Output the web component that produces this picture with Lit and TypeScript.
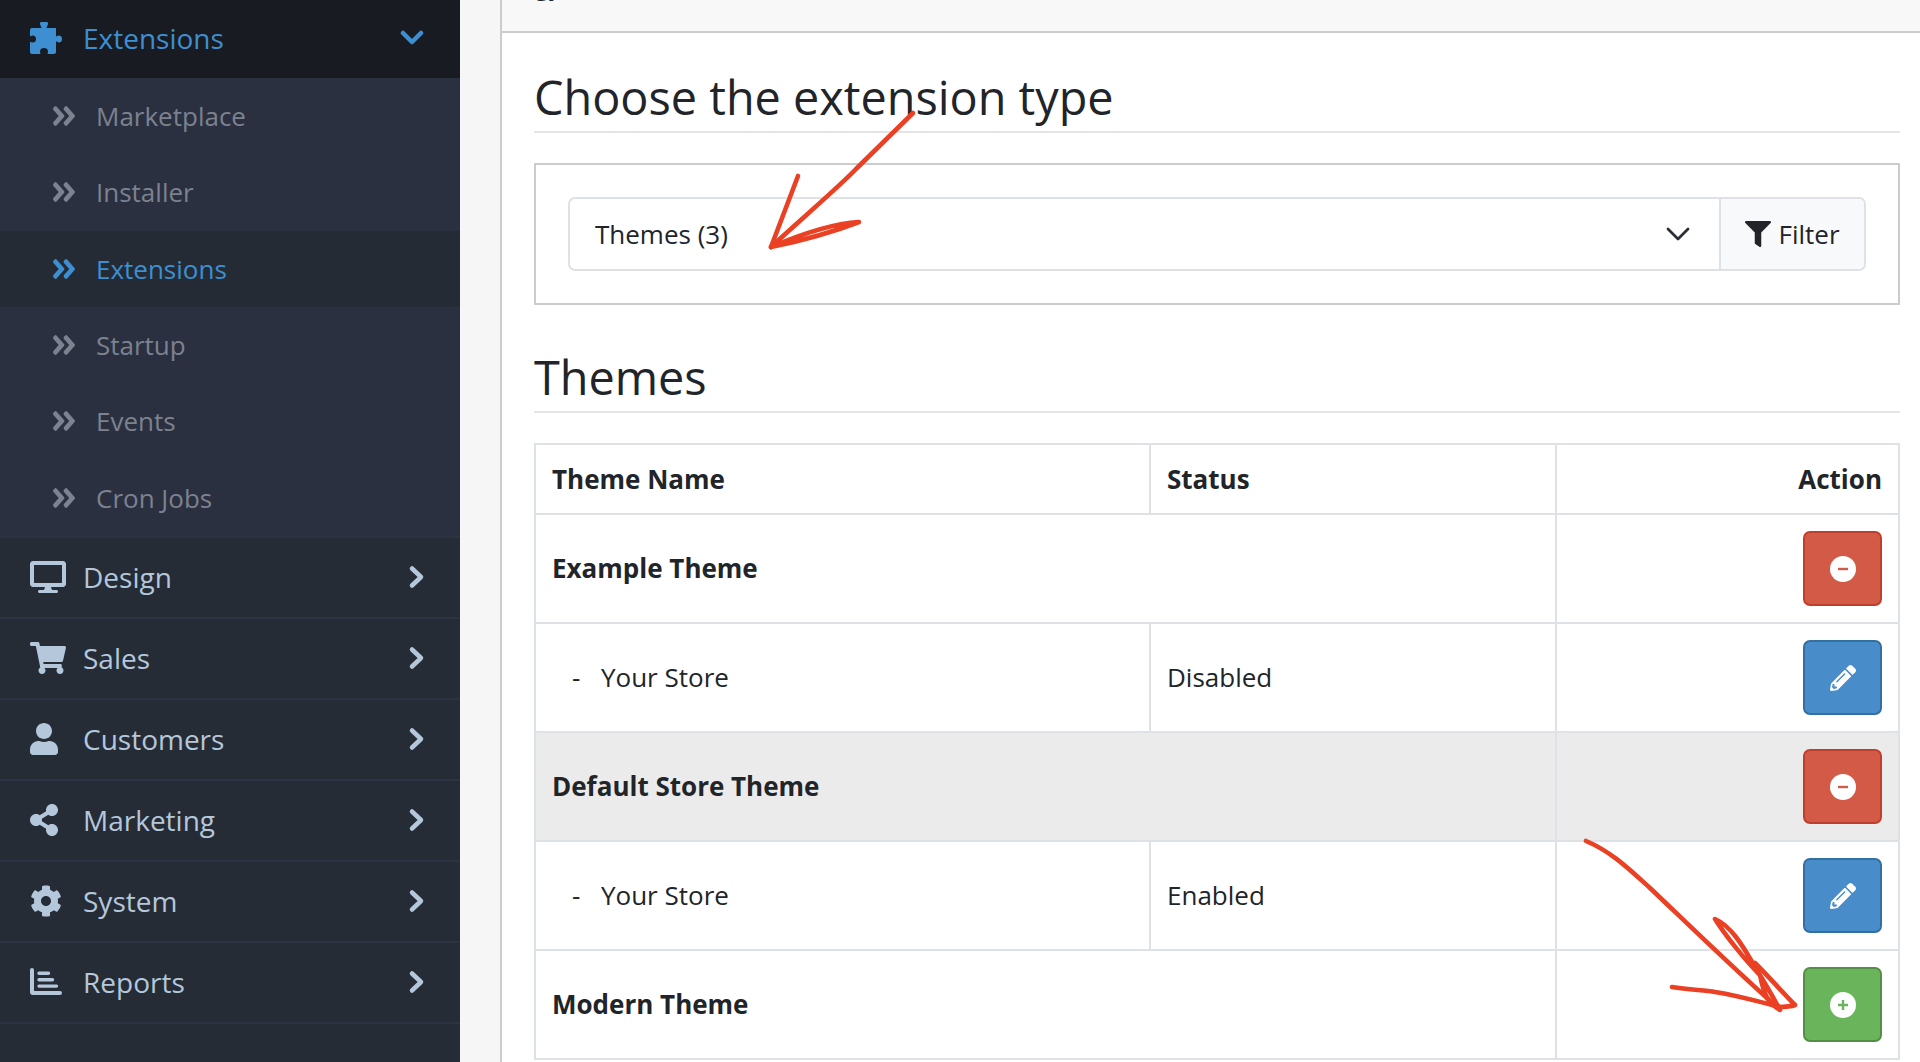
import { LitElement, html, css, svg } from "lit";
import { customElement } from "lit/decorators.js";

const ICONS: Record<string, [string, string]> = {
  puzzle: ["0 0 32 32", "M2 6H11C12 6 11 4.5 10.5 3.5A4 3.5 0 1 1 17.5 3.5C17 4.5 16 6 17 6H26V14C26 15 27.5 14 28.5 13.5A3.5 3.5 0 1 1 28.5 20.5C27.5 20 26 19 26 20V30A2 2 0 0 1 24 32H18C17 32 18 30.5 18 29.5A4 3.5 0 0 0 10 29.5C10 30.5 11 32 10 32H2A2 2 0 0 1 0 30V20C0 19 1.5 20.5 2.5 20.5A3.5 3.5 0 0 0 2.5 13.5C1.5 13.5 0 15 0 14V8A2 2 0 0 1 2 6Z"],
  desktop: ["0 0 576 512", "M528 0H48C21.5 0 0 21.5 0 48v320c0 26.5 21.5 48 48 48h192l-16 48h-72c-13.3 0-24 10.7-24 24s10.7 24 24 24h272c13.3 0 24-10.7 24-24s-10.7-24-24-24h-72l-16-48h192c26.5 0 48-21.5 48-48V48c0-26.5-21.5-48-48-48zm-16 352H64V64h448v288z"],
  cart: ["0 0 576 512", "M528.12 301.319l47.273-208C578.806 78.301 567.391 64 551.99 64H159.208l-9.166-44.81C147.758 8.021 137.93 0 126.529 0H24C10.745 0 0 10.745 0 24v16c0 13.255 10.745 24 24 24h69.883l70.248 343.435C147.325 417.1 136 435.222 136 456c0 30.928 25.072 56 56 56s56-25.072 56-56c0-15.674-6.447-29.835-16.824-40h209.647C430.447 426.165 424 440.326 424 456c0 30.928 25.072 56 56 56s56-25.072 56-56c0-22.172-12.888-41.332-31.579-50.405l5.517-24.276c3.413-15.018-8.002-29.319-23.403-29.319H218.117l-6.545-32h293.145c11.206 0 20.92-7.754 23.403-18.681z"],
  user: ["0 0 448 512", "M224 256c70.7 0 128-57.3 128-128S294.7 0 224 0 96 57.3 96 128s57.3 128 128 128zm89.6 32h-16.7c-22.2 10.2-46.9 16-72.9 16s-50.6-5.8-72.9-16h-16.7C60.2 288 0 348.2 0 422.4V464c0 26.5 21.5 48 48 48h352c26.5 0 48-21.5 48-48v-41.6c0-74.2-60.2-134.4-134.4-134.4z"],
  share: ["0 0 448 512", "M352 320c-22.608 0-43.387 7.819-59.79 20.895l-102.486-64.054a96.551 96.551 0 0 0 0-41.683l102.486-64.054C308.613 184.181 329.392 192 352 192c53.019 0 96-42.981 96-96S405.019 0 352 0s-96 42.981-96 96c0 7.158.79 14.13 2.276 20.841L155.79 180.895C139.387 167.819 118.608 160 96 160c-53.019 0-96 42.981-96 96s42.981 96 96 96c22.608 0 43.387-7.819 59.79-20.895l102.486 64.054A96.301 96.301 0 0 0 256 416c0 53.019 42.981 96 96 96s96-42.981 96-96-42.981-96-96-96z"],
  cog: ["0 0 512 512", "M487.4 315.7l-42.6-24.6c4.3-23.2 4.3-47 0-70.2l42.6-24.6c4.9-2.8 7.1-8.6 5.5-14-11.1-35.6-30-67.8-54.7-94.6-3.8-4.1-10-5.1-14.8-2.3L380.8 110c-17.9-15.4-38.5-27.3-60.8-35.1V25.8c0-5.6-3.9-10.5-9.4-11.7-36.7-8.2-74.3-7.8-109.2 0-5.5 1.2-9.4 6.1-9.4 11.7V75c-22.2 7.9-42.8 19.8-60.8 35.1L88.7 85.5c-4.9-2.8-11-1.9-14.8 2.3-24.7 26.7-43.6 58.9-54.7 94.6-1.7 5.4.6 11.2 5.5 14L67.3 221c-4.3 23.2-4.3 47 0 70.2l-42.6 24.6c-4.9 2.8-7.1 8.6-5.5 14 11.1 35.6 30 67.8 54.7 94.6 3.8 4.1 10 5.1 14.8 2.3l42.6-24.6c17.9 15.4 38.5 27.3 60.8 35.1v49.2c0 5.6 3.9 10.5 9.4 11.7 36.7 8.2 74.3 7.8 109.2 0 5.5-1.2 9.4-6.1 9.4-11.7v-49.2c22.2-7.9 42.8-19.8 60.8-35.1l42.6 24.6c4.9 2.8 11 1.9 14.8-2.3 24.7-26.7 43.6-58.9 54.7-94.6 1.5-5.5-.7-11.3-5.6-14.1zM256 336c-44.1 0-80-35.9-80-80s35.9-80 80-80 80 35.9 80 80-35.9 80-80 80z"],
  bars: ["0 0 32 27", "M2 0A2 2 0 0 1 4 2V22.6A.4.4 0 0 0 4.4 23H30A2 2 0 0 1 30 27H3A3 3 0 0 1 0 24V2A2 2 0 0 1 2 0ZM9 3.6H18.5A1.7 1.7 0 0 1 18.5 7H9A1.7 1.7 0 0 1 9 3.6ZM9 10H22.5A1.7 1.7 0 0 1 22.5 13.4H9A1.7 1.7 0 0 1 9 10ZM9 16.4H26.5A1.7 1.7 0 0 1 26.5 19.8H9A1.7 1.7 0 0 1 9 16.4Z"],
  filter: ["0 0 512 512", "M487.976 0H24.028C2.71 0-8.047 25.866 7.058 40.971L192 225.941V432c0 7.831 3.821 15.17 10.237 19.662l80 55.98C298.02 518.69 320 507.493 320 487.98V225.941l184.947-184.97C520.021 25.896 509.338 0 487.976 0z"],
  pencil: ["0 0 512 512", "M497.9 142.1l-46.1 46.1c-4.7 4.7-12.3 4.7-17 0l-111-111c-4.7-4.7-4.7-12.3 0-17l46.1-46.1c18.7-18.7 49.1-18.7 67.9 0l60.1 60.1c18.8 18.7 18.8 49.1 0 67.9zM284.2 99.8L21.6 362.4.4 483.9c-2.9 16.4 11.4 30.6 27.8 27.8l121.5-21.3 262.6-262.6c4.7-4.7 4.7-12.3 0-17l-111-111c-4.8-4.7-12.4-4.7-17.1 0zM124.1 339.9c-5.5-5.5-5.5-14.3 0-19.8l154-154c5.5-5.5 14.3-5.5 19.8 0s5.5 14.3 0 19.8l-154 154c-5.5 5.5-14.3 5.5-19.8 0zM88 424h48v36.3l-64.5 11.3-31.1-31.1L51.7 376H88v48z"],
};

const DBL = "M224.3 273l-136 136c-9.4 9.4-24.6 9.4-33.9 0l-22.6-22.6c-9.4-9.4-9.4-24.6 0-33.9l96.4-96.4-96.4-96.4c-9.4-9.4-9.4-24.6 0-33.9L54.3 103c9.4-9.4 24.6-9.4 33.9 0l136 136c9.5 9.4 9.5 24.6.1 34zm192-34l-136-136c-9.4-9.4-24.6-9.4-33.9 0l-22.6 22.6c-9.4 9.4-9.4 24.6 0 33.9l96.4 96.4-96.4 96.4c-9.4 9.4-9.4 24.6 0 33.9l22.6 22.6c9.4 9.4 24.6 9.4 33.9 0l136-136c9.4-9.2 9.4-24.4 0-33.8z";

const icon = (name: string, w: number, h: number) => html`<svg class="ic" width=${w} height=${h} viewBox=${ICONS[name][0]} preserveAspectRatio="xMinYMid meet"><path d=${ICONS[name][1]} fill="currentColor"></path></svg>`;

const MAIN = [
  ["desktop", "Design", 36, 32],
  ["cart", "Sales", 36, 32],
  ["user", "Customers", 28, 32],
  ["share", "Marketing", 28, 32],
  ["cog", "System", 32, 32],
  ["bars", "Reports", 32, 27],
] as const;

const SUB = ["Marketplace", "Installer", "Extensions", "Startup", "Events", "Cron Jobs"];

@customElement("app-root")
export class AppRoot extends LitElement {
  static styles = css`
    :host { display: block; position: relative; width: 1920px; height: 1062px; overflow: hidden; background: #fff; font-family: "Open Sans", sans-serif; color: #212529; }
    .page { display: flex; height: 1062px; }
    .ic { display: block; flex: none; }
    aside { flex: none; width: 460px; height: 1062px; background: #262c36; font-size: 28px; color: #b4c7db; }
    .top { height: 76px; padding: 0 36px 2px 30px; background: #181b21; color: #3d8fd1; display: flex; align-items: center; }
    .top .label { margin-left: 21px; flex: 1; }
    .top .chev { fill: none; stroke: currentColor; stroke-width: 4.5; stroke-linecap: round; stroke-linejoin: round; }
    .subs { background: #2b3040; height: 460px; box-sizing: border-box; border-bottom: 2px solid #2d3340; }
    .sub { height: 76.33px; display: flex; align-items: center; padding-left: 53px; color: #7c828f; font-size: 26px; }
    .sub .label { margin-left: 21px; }
    .sub.on { background: #252b35; color: #3d8fd1; }
    .row { height: 77px; border-bottom: 2px solid #2d3340; display: flex; align-items: center; padding: 0 34px 2px 30px; }
    .row .slot { width: 53px; flex: none; }
    .row .label { flex: 1; }
    .row .chev { fill: none; stroke: currentColor; stroke-width: 4.5; stroke-linecap: round; stroke-linejoin: round; }
    .gutter { flex: none; width: 40px; background: #f6f6f6; }
    main { flex: 1; border-left: 2px solid #ccc; min-width: 0; }
    .band { height: 31px; background: #f8f8f8; border-bottom: 2px solid #ccc; overflow: hidden; padding-left: 33px; font-size: 26px; line-height: 34px; }
    .band span { display: block; margin-top: -32px; }
    .content { padding: 0 20px 0 32px; }
    h3 { margin: 0; font-weight: 400; font-size: 46.8px; line-height: 58px; border-bottom: 2px solid #e5e5e5; padding-bottom: 5px; }
    .h1 { padding-top: 35px; }
    .fbox { margin-top: 30px; border: 2px solid #ccc; padding: 32px; height: 142px; box-sizing: border-box; }
    .group { display: flex; height: 74px; border: 2px solid #dee2e6; border-radius: 7px; box-sizing: border-box; font-size: 26px; }
    .select { flex: 1; display: flex; align-items: center; justify-content: space-between; padding: 0 29px 0 25px; }
    .select .chev { fill: none; stroke: #2b2f36; stroke-width: 2.8; stroke-linecap: round; stroke-linejoin: round; }
    .fbtn { flex: none; width: 145px; box-sizing: border-box; border-left: 2px solid #dee2e6; background: #f8f9fa; border-radius: 0 6px 6px 0; display: flex; align-items: center; justify-content: center; gap: 7px; }
    .h2 { margin-top: 43px; }
    table { margin-top: 30px; width: 1366px; border-collapse: collapse; table-layout: fixed; font-size: 26px; }
    td, th { border: 2px solid #dee2e6; padding: 0 16px; height: 109px; box-sizing: border-box; text-align: left; font-weight: 400; vertical-align: middle; }
    td:not(.r) { padding-bottom: 2px; }
    thead th { height: 70px; font-weight: 700; }
    td.name { font-weight: 700; }
    th.r, td.r { text-align: right; }
    tr.hl td { background: #ebebeb; }
    .dash { display: inline-block; width: 49px; padding-left: 20px; box-sizing: border-box; }
    .btn { display: inline-flex; vertical-align: middle; align-items: center; justify-content: center; width: 79px; height: 75px; box-sizing: border-box; border: 2px solid; border-radius: 7px; color: #fff; }
    .red { background: #d35a47; border-color: #bf3f2d; }
    .blue { background: #488dc9; border-color: #31709f; }
    .green { background: #6ab55b; border-color: #558f47; }
    .overlay { position: absolute; left: 0; top: 0; pointer-events: none; }
    .overlay path { fill: none; stroke: #ea4023; stroke-width: 4.6; stroke-linecap: round; stroke-linejoin: round; }
  `;

  private badge(sign: string, color: string) {
    return html`<svg class="ic" width="26" height="26" viewBox="0 0 26 26"><circle cx="13" cy="13" r="13" fill="#fff"></circle><path d=${sign === "+" ? "M8 13H18M13 8V18" : "M8 13H18"} stroke=${color} stroke-width="2.4" fill="none"></path></svg>`;
  }

  private action(kind: string) {
    if (kind === "del") return html`<span class="btn red">${this.badge("-", "#d35a47")}</span>`;
    if (kind === "add") return html`<span class="btn green">${this.badge("+", "#6ab55b")}</span>`;
    return html`<span class="btn blue">${icon("pencil", 26, 26)}</span>`;
  }

  render() {
    return html`
      <div class="page">
        <aside>
          <div class="top">
            ${icon("puzzle", 32, 32)}
            <span class="label">Extensions</span>
            <svg class="chev" width="24" height="16" viewBox="0 0 24 16"><path d="M3 3L12 12L21 3"></path></svg>
          </div>
          <div class="subs">
            ${SUB.map((s) => html`<div class="sub ${s === "Extensions" ? "on" : ""}"><svg class="ic" width="22" height="20" viewBox="24 96 400 320" preserveAspectRatio="none"><path d=${DBL} fill="currentColor"></path></svg><span class="label">${s}</span></div>`)}
          </div>
          ${MAIN.map(([ic, label, w, h]) => html`
            <div class="row">
              <span class="slot">${icon(ic, w, h)}</span>
              <span class="label">${label}</span>
              <svg class="chev" width="18" height="26" viewBox="0 0 18 26"><path d="M4 4.5L13 13L4 21.5"></path></svg>
            </div>`)}
        </aside>
        <div class="gutter"></div>
        <main>
          <div class="band"><span>gy</span></div>
          <div class="content">
            <h3 class="h1">Choose the extension type</h3>
            <div class="fbox">
              <div class="group">
                <div class="select">
                  <span>Themes (3)</span>
                  <svg class="chev" width="24" height="14" viewBox="0 0 24 14"><path d="M2 2L12 12L22 2"></path></svg>
                </div>
                <div class="fbtn">${icon("filter", 26, 26)}<span>Filter</span></div>
              </div>
            </div>
            <h3 class="h2">Themes</h3>
            <table>
              <colgroup><col style="width:615px" /><col style="width:406px" /><col /></colgroup>
              <thead><tr><th>Theme Name</th><th>Status</th><th class="r">Action</th></tr></thead>
              <tbody>
                <tr><td class="name" colspan="2">Example Theme</td><td class="r">${this.action("del")}</td></tr>
                <tr><td><span class="dash">-</span>Your Store</td><td>Disabled</td><td class="r">${this.action("edit")}</td></tr>
                <tr class="hl"><td class="name" colspan="2">Default Store Theme</td><td class="r">${this.action("del")}</td></tr>
                <tr><td><span class="dash">-</span>Your Store</td><td>Enabled</td><td class="r">${this.action("edit")}</td></tr>
                <tr><td class="name" colspan="2">Modern Theme</td><td class="r">${this.action("add")}</td></tr>
              </tbody>
            </table>
          </div>
        </main>
      </div>
      <svg class="overlay" width="1920" height="1062" viewBox="0 0 1920 1062">
        ${svg`
          <path d="M913 113L857 168C840 186 800 220 771 247"></path>
          <path d="M798 176L771 247"></path>
          <path d="M771 247Q820 237 859 222Q825 224 771 247"></path>
          <path d="M1586 841C1612 852 1630 870 1650 888C1690 926 1735 970 1777 1007"></path>
          <path d="M1715 919C1733 927 1745 950 1755 967C1763 980 1772 995 1780 1010C1770 1004 1765 1000 1760 975C1745 960 1725 935 1715 919Z"></path>
          <path d="M1755 963C1770 978 1785 995 1795 1005C1790 1007 1785 1007 1777 1007"></path>
          <path d="M1672 987C1690 990 1705 990 1715 992C1740 996 1760 1002 1780 1007"></path>
        `}
      </svg>
    `;
  }
}
